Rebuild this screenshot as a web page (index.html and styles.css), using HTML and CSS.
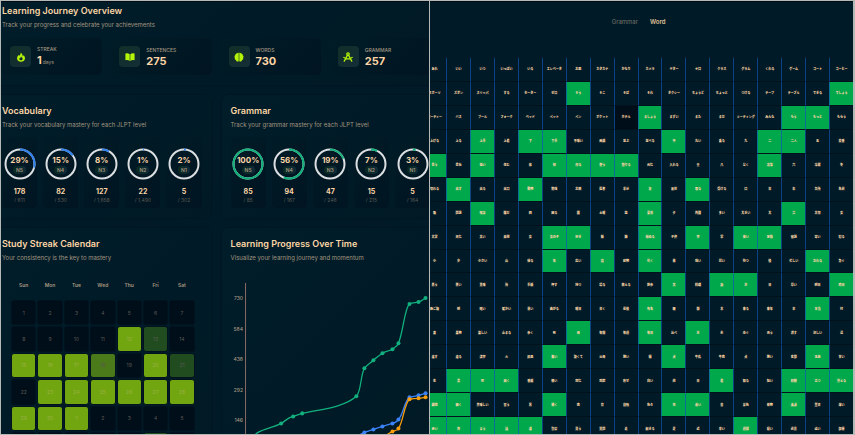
FILE: index.html
```html
<!DOCTYPE html>
<html lang="en">
<head>
    <meta charset="UTF-8">
    <meta name="viewport" content="width=device-width, initial-scale=1.0">
    <title>Learning Journey</title>
    <link rel="stylesheet" href="styles.css">
</head>
<body>
    <main class="dashboard">
        <section class="panel overview">
            <h2 class="panel-title">Learning Journey Overview</h2>
            <p class="panel-subtitle">Track your progress and celebrate your achievements</p>
            <div class="stats">
                <div class="stat-card">
                    <div class="stat-icon">
                        <svg viewBox="0 0 24 24"><path fill-rule="evenodd" d="M11 1c1 4-1 5-3 8L6.500 7C4 9 2.500 12 2.500 15c0 5 4 8.500 9.500 8.500s9.500-3.500 9.500-8.500c0-3.500-1.500-5-3.500-7l-2 2.500C16 6 14 3 11 1zM12 11c1 2 4 3 4 5.500 0 2-1.700 3.500-4 3.500s-4-1.500-4-3.500c0-1.500.800-2.500 2-3.500l1 1.500z"/></svg>
                    </div>
                    <div>
                        <div class="stat-label">Streak</div>
                        <div class="stat-value">1<small>days</small></div>
                    </div>
                </div>
                <div class="stat-card">
                    <div class="stat-icon">
                        <svg viewBox="0 0 24 24"><path d="M1 4c4-1.500 7-1 10.300 1.500v16C8 19 5 18.500 1 20zM23 4c-4-1.500-7-1-10.300 1.500v16C16 19 19 18.500 23 20z"/></svg>
                    </div>
                    <div>
                        <div class="stat-label">Sentences</div>
                        <div class="stat-value">275</div>
                    </div>
                </div>
                <div class="stat-card">
                    <div class="stat-icon">
                        <svg viewBox="0 0 24 24"><path d="M11.300 2v20C8 23.500 5.500 22 5 19.500 2.500 19 1 16.500 2 14c-1.500-2-1-5 1-6C3 5 5 3.500 7 3.500 8 1.500 10 1 11.300 2zM12.700 2v20c3.300 1.500 5.800 0 6.300-2.500 2.500-.5 4-3 3-5.500 1.500-2 1-5-1-6 0-3-2-4.500-4-4.500C16 1.500 14 1 12.700 2z"/></svg>
                    </div>
                    <div>
                        <div class="stat-label">Words</div>
                        <div class="stat-value">730</div>
                    </div>
                </div>
                <div class="stat-card">
                    <div class="stat-icon">
                        <svg viewBox="0 0 24 24"><g fill="none" stroke="currentColor" stroke-width="3" stroke-linecap="round"><circle cx="12" cy="5" r="3"/><path d="M10.500 8 3 22M13.500 8 21 22M2 13c5 5 15 5 20 0"/></g></svg>
                    </div>
                    <div>
                        <div class="stat-label">Grammar</div>
                        <div class="stat-value">257</div>
                    </div>
                </div>
            </div>
        </section>

        <div class="panel-row">
            <section class="panel">
                <h2 class="panel-title">Vocabulary</h2>
                <p class="panel-subtitle">Track your vocabulary mastery for each JLPT level</p>
                <div class="levels levels-vocabulary" id="vocabulary"></div>
            </section>
            <section class="panel">
                <h2 class="panel-title">Grammar</h2>
                <p class="panel-subtitle">Track your grammar mastery for each JLPT level</p>
                <div class="levels levels-grammar" id="grammar"></div>
            </section>
        </div>

        <div class="panel-row">
            <section class="panel">
                <h2 class="panel-title">Study Streak Calendar</h2>
                <p class="panel-subtitle">Your consistency is the key to mastery</p>
                <div class="calendar" id="calendar">
                    <span class="weekday">Sun</span>
                    <span class="weekday">Mon</span>
                    <span class="weekday">Tue</span>
                    <span class="weekday">Wed</span>
                    <span class="weekday">Thu</span>
                    <span class="weekday">Fri</span>
                    <span class="weekday">Sat</span>
                </div>
            </section>
            <section class="panel">
                <h2 class="panel-title">Learning Progress Over Time</h2>
                <p class="panel-subtitle">Visualize your learning journey and momentum</p>
                <svg class="chart" viewBox="0 0 199 184">
                    <g class="chart-labels">
                        <text x="12" y="22">730</text>
                        <text x="12" y="53">584</text>
                        <text x="12" y="83">438</text>
                        <text x="12" y="114">292</text>
                        <text x="12" y="144">146</text>
                    </g>
                    <path class="axis" d="M14.500 5V173H199"/>
                    <g class="line line-words">
                        <path d="M20 158C24 157 25 155 27 154C34 150 43 149 50 145C55 142 57 139 62 138C65 137 68 136 71 135C89 131 113 129 125 118C130 113 129 97 133 90C136 86 139 85 142 82C145 79 148 77 151 75C154 73 158 73 161 71C164 69 166 68 167 65C172 53 173 30 178 26C181 24 184 25 187 24C190 23 192 21 194 20"/>
                        <circle cx="50" cy="145" r="2"/><circle cx="62" cy="138" r="2"/><circle cx="71" cy="135" r="2"/><circle cx="125" cy="118" r="2"/><circle cx="133" cy="90" r="2"/><circle cx="142" cy="82" r="2"/><circle cx="151" cy="75" r="2"/><circle cx="161" cy="71" r="2"/><circle cx="167" cy="65" r="2"/><circle cx="178" cy="26" r="2"/><circle cx="187" cy="24" r="2"/><circle cx="194" cy="20" r="2"/>
                    </g>
                    <g class="line line-sentences">
                        <path d="M125 158L133 154L142 151L151 148L161 145C164 144 166 143 167 141C172 136 173 122 178 119C181 118 184 118 187 117L194 115"/>
                        <circle cx="133" cy="154" r="2"/><circle cx="142" cy="151" r="2"/><circle cx="151" cy="148" r="2"/><circle cx="161" cy="145" r="2"/><circle cx="167" cy="141" r="2"/><circle cx="178" cy="119" r="2"/><circle cx="187" cy="117" r="2"/><circle cx="194" cy="115" r="2"/>
                    </g>
                    <g class="line line-points">
                        <path d="M151 159L161 153C164 152 166 152 167 150C172 143 173 124 178 121C181 120 184 120 187 120L194 119"/>
                        <circle cx="161" cy="153" r="2"/><circle cx="167" cy="150" r="2"/><circle cx="178" cy="121" r="2"/><circle cx="187" cy="120" r="2"/><circle cx="194" cy="119" r="2"/>
                    </g>
                </svg>
            </section>
        </div>
    </main>

    <section class="browser">
        <nav class="tabs">
            <button type="button" class="tab">Grammar</button>
            <button type="button" class="tab active">Word</button>
        </nav>
        <div class="word-grid" id="words" lang="ja"></div>
    </section>

    <script>
        const vocabulary = [
            ['N5', 29, '178', '611'],
            ['N4', 15, '82', '530'],
            ['N3', 8, '127', '1,658'],
            ['N2', 1, '22', '1,490'],
            ['N1', 2, '5', '302']
        ];
        const grammar = [
            ['N5', 100, '85', '85'],
            ['N4', 56, '94', '167'],
            ['N3', 19, '47', '246'],
            ['N2', 7, '15', '215'],
            ['N1', 3, '5', '164']
        ];

        function renderLevels(id, levels) {
            document.getElementById(id).innerHTML = levels.map(([name, percent, known, total]) => `
                <div class="level-card">
                    <div class="ring">
                        <svg viewBox="0 0 32 32">
                            <circle class="ring-track" cx="16" cy="16" r="14.500"/>
                            <circle class="ring-value" cx="16" cy="16" r="14.500" pathLength="100" stroke-dasharray="${percent} 100"/>
                        </svg>
                        <div class="ring-text">
                            <span class="percent">${percent}%</span>
                            <span class="badge">${name}</span>
                        </div>
                    </div>
                    <div class="known">${known}</div>
                    <div class="total">/ ${total}</div>
                </div>`).join('');
        }

        renderLevels('vocabulary', vocabulary);
        renderLevels('grammar', grammar);

        // 0 = no study, 1-3 = activity level
        const activity = [
            '0000000',
            '0000310',
            '3332031',
            '0333333',
            '3330000',
            '0000010'
        ].join('');

        const calendar = document.getElementById('calendar');
        [...activity].forEach((level, i) => {
            const day = document.createElement('span');
            day.className = 'day level-' + level;
            // the last row is below the fold, its cells carry no number
            if (i < 35) {
                day.textContent = i < 30 ? i + 1 : i - 29;
            }
            calendar.appendChild(day);
        });

        // * marks a learned word, - the hovered one
        const words = [
            'あれ いい いつ いっぱい いる エレベータ お皿 カタカナ かなり カメラ ギター キロ クラス グラム くれる ゲーム コート コーヒー',
            'スポーツ ズボン スリッパ する セーター ゼロ *そう そこ そば それ タクシー ちょうど ちょっと つける テープ テーブル できる *でしょう',
            'パーティー バス プール フォーク ベッド ペット ペン ポケット -ホテル *ましょう まずい また まだ ミーティング みんな *もう *もっと もらう',
            '上げる 上る *上手 上着 *下 *下手 不味い 両親 並ぶ 並べる *中 丸い 乗る 九 *二 *二人 五 交番',
            '*会う 会社 *低い 住む 体 *何 *作る *使う *借りる 元気 入れる 全 八 公く *次第 六 冷蔵 冬',
            '切れる *出す 出る 出口 *動物 勉強 北側 医者 半分 *友 反対 *取る 受ける 口 古 右 台所 名前',
            '吸 問題 *喫茶 嫌だ 四 困る 国 土曜 塩 *夏休 夕 外国 多い 大きい 大 *声 大切 女',
            '大学 天気 太い 奥様 女 *女の子 *好き 妹 姉 *始める 子供 *字 学 *安い *家族 宿題 寒い 寝る',
            '小 少 小さい 山 帰る *年 広い *店 建物 *引く 弟 強い 弱い 待つ 後 忙しい *忘れる 急ぐ',
            '思う 悪い 意味 所 手紙 押す 持つ 撮る 教える 散歩 *文 料理 *新 *方 日 早い 明日 *昨日',
            '晩ご飯 明 暗い 暖かい 暑い 曲がる 曜日 書く 最後 *有名 服 朝 木 来る 来年 本 *本当 村',
            '東 果物 楽しい 止まる 歩く 死 *母 毎朝 毎週 *毎日 比べ *水 氷 泳ぐ 洗う 消す 涼しい 温',
            '渡す 渡る 漢字 火 灰皿 *無い 熱くて 父母 狭い 猫 *犬 牛乳 牛肉 犬 狭い 玄関 *玉葱 甘い',
            '生 *男 *町 *画く 番組 痛い 病気 病院 痩せ 白い 的 目 *着 知る 短い *砂糖 *立つ *答える',
            '*縄跳 *細く 美味しい 習う 耳 *聞く 肉 背 自転 色々 *花 *若い 苦 茶色 荷物 *英語 葉書 薄い',
            '*赤い *角 *言う *話 *誰 警察 買う 質問 走 起きる 足 近 辛い *週間 遅い 道具 遠い 部屋'
        ];

        document.getElementById('words').innerHTML = words.map(row =>
            row.split(' ').map(word => {
                const state = word[0] === '*' ? ' learned' : word[0] === '-' ? ' hovered' : '';
                return `<span class="word${state}">${word.replace(/^[*-]/, '')}</span>`;
            }).join('')
        ).join('');
    </script>
</body>
</html>
```
FILE: styles.css
```css
:root {
    --page: #001b27;
    --panel-dark: #001521;
    --text: #fdd5a6;
    --muted: #a39580;
    --lime: #b5f507;
    --green: #00a84c;
    --line: #0d4186;
    --frame: #b4b9b5;
}

* {
    margin: 0;
    padding: 0;
    box-sizing: border-box;
}

body {
    display: grid;
    grid-template-columns: 101fr 100fr;
    gap: 1px;
    height: 100vh;
    padding: 1px;
    overflow: hidden;
    background: var(--frame);
    color: var(--text);
    font-family: Inter, "Noto Sans CJK JP", sans-serif;
}

.dashboard,
.browser {
    min-width: 0;
    overflow: hidden;
    background: var(--page);
    border-top: 1px solid #000d16;
}

/* the panels run past both edges of the pane */
.dashboard {
    display: flex;
    flex-direction: column;
    gap: 10px;
}

.panel {
    min-width: 0;
    padding: 10px 9px;
    border-radius: 6px;
    background: linear-gradient(135deg, #001d29, #001925);
    box-shadow: 0 0 2px #00121d;
}

.overview,
.panel-row {
    flex-shrink: 0;
    margin: 0 -10px 0 -8px;
}

.overview {
    padding-top: 3px;
}

.panel-row {
    display: grid;
    grid-template-columns: 1fr 1fr;
    gap: 11px;
}

.panel-title {
    font-size: 9px;
    line-height: 12px;
    font-weight: 600;
    white-space: nowrap;
}

.panel-subtitle {
    margin-top: 4px;
    font-size: 6px;
    line-height: 8px;
    color: var(--muted);
    white-space: nowrap;
}

.stats {
    display: grid;
    grid-template-columns: repeat(4, 1fr);
    gap: 9px;
    margin-top: 9px;
}

.stat-card {
    display: flex;
    align-items: center;
    gap: 6px;
    height: 37px;
    padding: 0 8px;
    border-radius: 5px;
    background: linear-gradient(135deg, #001c27, var(--panel-dark));
}

.stat-icon {
    display: flex;
    align-items: center;
    justify-content: center;
    width: 21px;
    height: 21px;
    border-radius: 4px;
    background: linear-gradient(135deg, #112f28, #142e37);
}

.stat-icon svg {
    width: 10px;
    height: 10px;
    fill: var(--lime);
    color: var(--lime);
}

.stat-label {
    font-size: 5px;
    line-height: 8px;
    font-weight: 500;
    color: var(--muted);
    text-transform: uppercase;
}

.stat-value {
    font-size: 11px;
    line-height: 14px;
    font-weight: 700;
}

.stat-value small {
    margin-left: 1px;
    font-size: 5px;
    font-weight: 400;
    color: var(--muted);
}

.levels {
    display: grid;
    grid-template-columns: repeat(5, 1fr);
    gap: 6px;
    margin-top: 8px;
}

.level-card {
    display: flex;
    flex-direction: column;
    align-items: center;
    padding: 11px 0 4px;
    border-radius: 4px;
    background: linear-gradient(135deg, #001b27, var(--panel-dark));
}

.ring {
    display: grid;
    width: 32px;
    height: 32px;
}

.ring svg,
.ring-text {
    grid-area: 1 / 1;
}

.ring svg {
    transform: rotate(-90deg);
}

.ring circle {
    fill: none;
    stroke-width: 2;
}

.ring-track {
    stroke: #dcdfe2;
}

.levels-vocabulary .ring-value {
    stroke: #3080ee;
}

.levels-grammar .ring-value {
    stroke: #10b07b;
}

.ring-text {
    display: flex;
    flex-direction: column;
    align-items: center;
    justify-content: center;
    gap: 1px;
}

.percent {
    font-size: 8px;
    line-height: 10px;
    font-weight: 700;
}

.badge {
    padding: 0 3px;
    border-radius: 4px;
    background: linear-gradient(90deg, #0b2a20, #0e2b3a);
    font-size: 5px;
    line-height: 8px;
    font-weight: 600;
    color: #a7967d;
}

.known {
    margin-top: 7px;
    font-size: 7px;
    line-height: 9px;
    font-weight: 700;
}

.total {
    font-size: 5px;
    line-height: 8px;
    color: #5c5a54;
}

.calendar {
    display: grid;
    grid-template-columns: repeat(7, 1fr);
    gap: 1px;
    margin-top: 17px;
    padding: 0 7px 0 9px;
    text-align: center;
}

.weekday {
    padding-bottom: 8px;
    font-size: 5px;
    line-height: 12px;
    font-weight: 600;
    color: #a89780;
}

.day {
    display: flex;
    align-items: center;
    justify-content: center;
    aspect-ratio: 1;
    border: 1px solid #00121d;
    border-radius: 3px;
    font-size: 5px;
    color: #5c5951;
}

.level-0 {
    background: #000e1a;
}

.level-1 {
    background: #214c20;
}

.level-2 {
    background: #4a7a19;
}

.level-3 {
    background: #72a611;
    color: #98b044;
}

.chart {
    display: block;
    width: 100%;
    margin-top: 16px;
}

.chart-labels {
    fill: var(--muted);
    font-size: 5px;
    font-weight: 500;
    text-anchor: end;
}

.axis {
    fill: none;
    stroke: #8a6a64;
}

.line path {
    fill: none;
    stroke: currentColor;
    stroke-width: 1.3;
}

.line circle {
    fill: currentColor;
}

.line-words {
    color: #12b07e;
}

.line-sentences {
    color: #3b82f6;
}

.line-points {
    color: #f99d0b;
}

.browser {
    margin-right: 1px;
}

.tabs {
    display: flex;
    align-items: center;
    justify-content: center;
    gap: 12px;
    height: 40px;
    margin-bottom: 16px;
    padding-right: 6px;
}

.tab {
    border: 0;
    background: none;
    font-family: inherit;
    font-size: 6px;
    line-height: 12px;
    color: #77736a;
    cursor: pointer;
}

.tab.active {
    font-weight: 600;
    color: #e0c19a;
}

/* first column starts outside the pane */
.word-grid {
    display: grid;
    grid-template-columns: repeat(18, 1fr);
    margin-left: -8px;
}

.word {
    display: flex;
    align-items: center;
    justify-content: center;
    min-width: 0;
    aspect-ratio: 1;
    border-left: 1px solid var(--line);
    border-bottom: 1px solid #00121c;
    font-size: 3px;
    font-weight: 900;
    white-space: nowrap;
}

.word.learned {
    background: var(--green);
    border-left-color: #0c6f9a;
}

.word.hovered {
    background: #000e1a;
}
```
